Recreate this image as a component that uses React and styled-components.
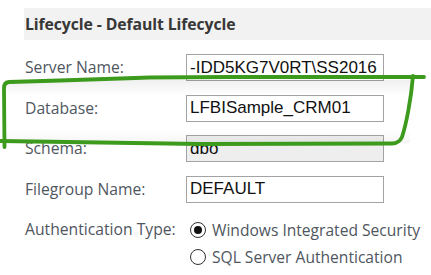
import React from "react";
import styled, { createGlobalStyle } from "styled-components";

const GlobalStyle = createGlobalStyle`
  html, body {
    margin: 0;
    padding: 0;
    background: #ffffff;
  }
  body {
    font-family: "Open Sans", "Noto Sans", sans-serif;
  }
`;

const Page = styled.div`
  position: relative;
  width: 431px;
  height: 275px;
  overflow: hidden;
  padding-top: 8px;
  box-sizing: border-box;
`;

const Header = styled.div`
  margin-left: 24px;
  height: 32px;
  background: #f2f2f2;
  display: flex;
  align-items: center;
  padding-left: 1px;
  font-size: 15.8px;
  font-weight: 700;
  color: #373737;
  letter-spacing: -0.1px;
`;

const Form = styled.div`
  display: grid;
  grid-template-columns: 161px 198px;
  grid-auto-rows: 27px;
  row-gap: 13.5px;
  margin: 14px 0 0 25px;
  align-items: center;
`;

const Label = styled.div`
  font-size: 15.7px;
  color: #4f5660;
  align-self: ${(p) => (p.$top ? "start" : "center")};
  line-height: 27px;
`;

const Input = styled.input`
  box-sizing: border-box;
  width: 198px;
  height: 27px;
  border: 1px solid #a3a3a3;
  background: ${(p) => (p.disabled ? "#eeeeee" : "#ffffff")};
  font-family: "Liberation Sans", Arial, sans-serif;
  font-size: 17px;
  color: #111111;
  padding: 0 3px;
  margin: 0;
  outline: none;
  &:disabled {
    color: #111111;
  }
`;

const RadioGroup = styled.div`
  display: flex;
  flex-direction: column;
  grid-row: span 2;
  align-self: start;
  margin-left: 4px;
`;

const RadioRow = styled.label`
  display: flex;
  align-items: center;
  height: 27px;
  gap: 6px;
  font-size: 15.6px;
  color: #4f5660;
  white-space: nowrap;
`;

const Circle = styled.span`
  box-sizing: border-box;
  width: 16px;
  height: 16px;
  border-radius: 50%;
  border: 1.5px solid #333;
  display: flex;
  align-items: center;
  justify-content: center;
  flex: none;

  &::after {
    content: "";
    width: 8px;
    height: 8px;
    border-radius: 50%;
    background: ${(p) => (p.$checked ? "#111" : "transparent")};
  }
`;

const Ink = styled.svg`
  position: absolute;
  left: 0;
  top: 0;
  pointer-events: none;
`;

function Radio({ checked, children }) {
  return (
    <RadioRow>
      <Circle $checked={checked} />
      {children}
    </RadioRow>
  );
}

export default function App() {
  return (
    <Page>
      <GlobalStyle />
      <Header>Lifecycle - Default Lifecycle</Header>
      <Form>
        <Label>Server Name:</Label>
        <Input defaultValue="-IDD5KG7V0RT\SS2016" />
        <Label>Database:</Label>
        <Input defaultValue="LFBISample_CRM01" />
        <Label>Schema:</Label>
        <Input defaultValue="dbo" disabled />
        <Label>Filegroup Name:</Label>
        <Input defaultValue="DEFAULT" />
        <Label $top>Authentication Type:</Label>
        <RadioGroup>
          <Radio checked>Windows Integrated Security</Radio>
          <Radio>SQL Server Authentication</Radio>
        </RadioGroup>
      </Form>
      <Ink width="431" height="275" viewBox="0 0 431 275">
        <defs>
          <linearGradient id="shade" x1="0" y1="0" x2="0" y2="1">
            <stop offset="0" stopColor="#000" stopOpacity="0.06" />
            <stop offset="0.25" stopColor="#000" stopOpacity="0" />
            <stop offset="0.8" stopColor="#000" stopOpacity="0" />
            <stop offset="1" stopColor="#000" stopOpacity="0.04" />
          </linearGradient>
        </defs>
        <rect x="5" y="80" width="405" height="63" fill="url(#shade)" />
        <g fill="none" stroke="#3c9a1c" strokeWidth="3.8" strokeLinecap="round" strokeLinejoin="round">
          <path d="M424 77 L230 77 L150 77.5 L60 80.5 L9 82 Q4 82.5 4 88 L4.5 147" />
          <path d="M413 76 C411 100 406 125 402 137 Q399 143.5 392 143.5 L200 144 L0 141" />
        </g>
      </Ink>
    </Page>
  );
}
